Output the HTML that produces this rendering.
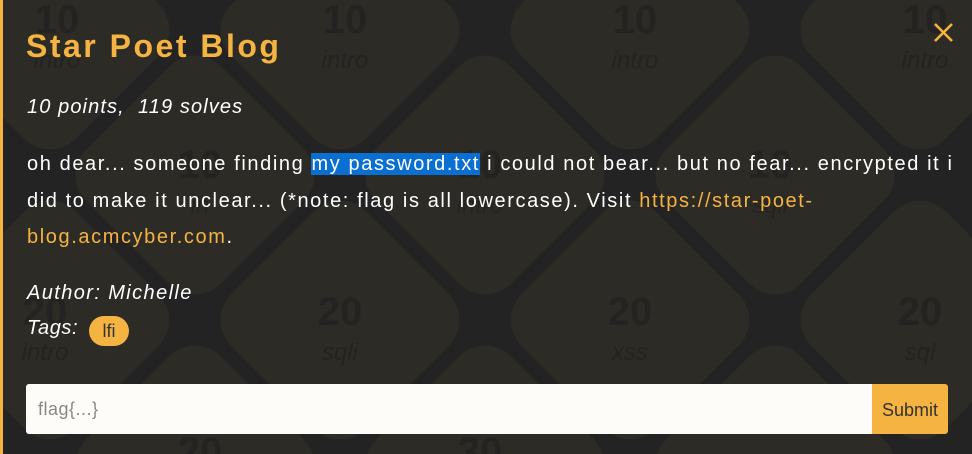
<!DOCTYPE html>
<html><head><style>
html,body{margin:0;padding:0;width:972px;height:454px;overflow:hidden;}
body{background:#232323;position:relative;font-family:"Liberation Sans",sans-serif;}
#bg{position:absolute;left:0;top:0;width:972px;height:454px;overflow:hidden;}
.t{position:absolute;width:190px;height:190px;background:#2d2b26;border-radius:36px;transform:rotate(45deg);}
.lb{position:absolute;width:120px;text-align:center;color:#242321;}
.lb b{display:block;font-size:40px;font-weight:900;line-height:40px;}
.lb i{display:block;font-size:24px;line-height:30px;margin-top:6px;}
.bar{position:absolute;left:0;top:0;width:3px;height:454px;background:#f5b342;}
.c{position:absolute;color:#fff;}
</style></head><body>
<div id="bg">
<div class="t" style="left:-45px;top:-65px"></div>
<div class="t" style="left:245px;top:-65px"></div>
<div class="t" style="left:535px;top:-65px"></div>
<div class="t" style="left:825px;top:-65px"></div>
<div class="t" style="left:100px;top:80px"></div>
<div class="t" style="left:390px;top:80px"></div>
<div class="t" style="left:680px;top:80px"></div>
<div class="t" style="left:-45px;top:225px"></div>
<div class="t" style="left:245px;top:225px"></div>
<div class="t" style="left:535px;top:225px"></div>
<div class="t" style="left:825px;top:225px"></div>
<div class="t" style="left:100px;top:370px"></div>
<div class="t" style="left:390px;top:370px"></div>
<div class="t" style="left:680px;top:370px"></div>
<div class="lb" style="left:-3px;top:0px"><b>10</b><i>intro</i></div>
<div class="lb" style="left:285px;top:0px"><b>10</b><i>intro</i></div>
<div class="lb" style="left:575px;top:0px"><b>10</b><i>intro</i></div>
<div class="lb" style="left:865px;top:0px"><b>10</b><i>intro</i></div>
<div class="lb" style="left:140px;top:145px"><b>10</b><i>in</i></div>
<div class="lb" style="left:420px;top:145px"><b>10</b><i>intro</i></div>
<div class="lb" style="left:710px;top:145px"><b>10</b><i>sqli</i></div>
<div class="lb" style="left:-15px;top:292px"><b>20</b><i>intro</i></div>
<div class="lb" style="left:280px;top:292px"><b>20</b><i>sqli</i></div>
<div class="lb" style="left:570px;top:292px"><b>20</b><i>xss</i></div>
<div class="lb" style="left:860px;top:292px"><b>20</b><i>sql</i></div>
<div class="lb" style="left:140px;top:432px"><b>20</b></div>
<div class="lb" style="left:420px;top:432px"><b>30</b></div>
</div>
<div class="bar"></div>
<div class="c" style="left:26px;top:28px;font-size:32px;font-weight:bold;color:#f5b342;letter-spacing:2.5px">Star Poet Blog</div>
<svg style="position:absolute;left:933px;top:22px" width="21" height="21"><path d="M2 2L19 19M19 2L2 19" stroke="#f5b342" stroke-width="2.6" fill="none"/></svg>
<div class="c" style="left:27px;top:96px;font-size:20px;font-style:italic;letter-spacing:1.1px">10 points,&nbsp; 119 solves</div>
<div class="c" style="left:27px;top:146px;width:935px;font-size:20px;line-height:36.5px;letter-spacing:1.6px">oh dear... someone finding <span style="background:#0a6fd1">my password.txt</span> i could not bear... but no fear... encrypted it i did to make it unclear... (*note: flag is all lowercase). Visit <span style="color:#f5b342">https://star-poet-blog.acmcyber.com</span>.</div>
<div class="c" style="left:27px;top:282px;font-size:20px;font-style:italic;letter-spacing:1.4px">Author: Michelle</div>
<div class="c" style="left:27px;top:317px;font-size:20px;font-style:italic;letter-spacing:0.6px">Tags:</div>
<div class="c" style="left:89px;top:316px;width:40px;height:30px;border-radius:15px;background:#f5b342;color:#333;font-size:18px;line-height:30px;text-align:center">lfi</div>
<div style="position:absolute;left:26px;top:384px;width:846px;height:50px;background:#fdfcf8;border-radius:3px 0 0 3px"></div>
<div style="position:absolute;left:38px;top:384px;line-height:50px;font-size:18px;color:#888;letter-spacing:0.5px">flag{...}</div>
<div style="position:absolute;left:872px;top:384px;width:76px;height:50px;background:#f5b342;border-radius:0 3px 3px 0;color:#333;font-size:18px;line-height:52px;text-align:center">Submit</div>
</body></html>
